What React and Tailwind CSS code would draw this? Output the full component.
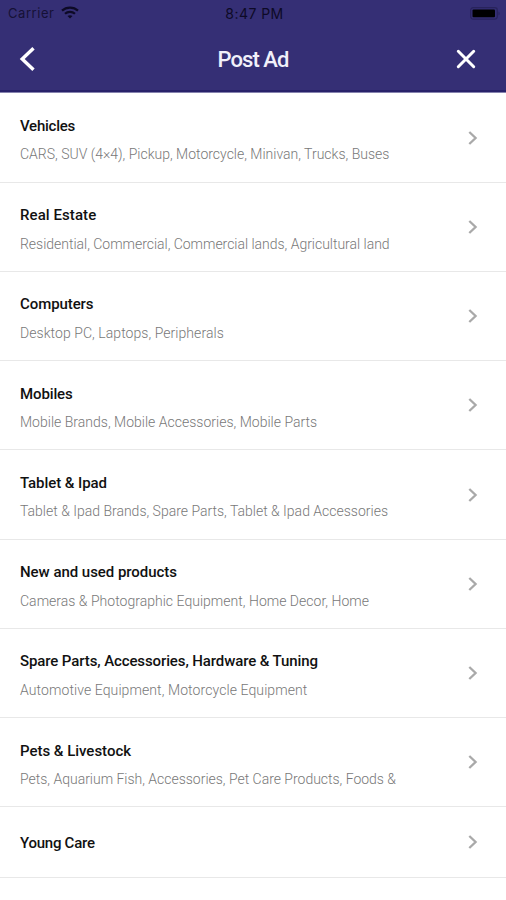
import React from "react";

const CATEGORIES = [
  { name: "Vehicles", sub: "CARS, SUV (4×4), Pickup, Motorcycle, Minivan, Trucks, Buses", nameSpacing: "tracking-[-0.25px]", subSpacing: "tracking-normal" },
  { name: "Real Estate", sub: "Residential, Commercial, Commercial lands, Agricultural land", nameSpacing: "tracking-[0.08px]", subSpacing: "tracking-[-0.02px]" },
  { name: "Computers", sub: "Desktop PC, Laptops, Peripherals", nameSpacing: "tracking-[-0.08px]", subSpacing: "tracking-[0.06px]" },
  { name: "Mobiles", sub: "Mobile Brands, Mobile Accessories, Mobile Parts", nameSpacing: "tracking-[-0.12px]", subSpacing: "tracking-[0.01px]" },
  { name: "Tablet & Ipad", sub: "Tablet & Ipad Brands, Spare Parts, Tablet & Ipad Accessories", nameSpacing: "tracking-[-0.07px]", subSpacing: "tracking-normal" },
  { name: "New and used products", sub: "Cameras & Photographic Equipment, Home Decor, Home", nameSpacing: "tracking-[-0.04px]", subSpacing: "tracking-[0.02px]" },
  { name: "Spare Parts, Accessories, Hardware & Tuning", sub: "Automotive Equipment, Motorcycle Equipment", nameSpacing: "tracking-[-0.11px]", subSpacing: "tracking-[0.09px]" },
  { name: "Pets & Livestock", sub: "Pets, Aquarium Fish, Accessories, Pet Care Products, Foods &", nameSpacing: "tracking-[-0.02px]", subSpacing: "tracking-[-0.01px]" },
  { name: "Young Care", nameSpacing: "tracking-[-0.25px]" },
];

function StatusBar() {
  return (
    <div className="grid grid-cols-3 items-center h-[26px] pt-px pl-[8px] pr-[5px] text-[#0d0a26] font-['Inter',sans-serif] text-[13px]">
      <div className="flex items-center gap-[7px]">
        <span className="tracking-[0.55px] text-[#151136]">Carrier</span>
        <svg className="-mt-[2px]" width="18" height="13" viewBox="0 0 18 13" fill="none" stroke="currentColor" strokeWidth="2.2">
          <path d="M1 4.6C5.4 0.5 12.6 0.5 17 4.6" />
          <path d="M4 7.8C6.8 5.2 11.2 5.2 14 7.8" />
          <path d="M9 12.6L6.5 10.1C7.9 8.9 10.1 8.9 11.5 10.1Z" fill="currentColor" stroke="none" />
        </svg>
      </div>
      <span className="-mx-2 text-center text-sm tracking-[0.45px]">8:47 PM</span>
      <svg className="justify-self-end" width="31" height="13" viewBox="0 0 31 13">
        <rect x="0.7" y="0.7" width="26.6" height="11.4" rx="2.5" fill="none" stroke="#28235c" strokeWidth="1.2" />
        <rect x="2.5" y="2.6" width="22.5" height="7.6" rx="1" fill="#000000" />
        <path d="M28.5 4.4C30 5 30 7.8 28.5 8.4Z" fill="#28235c" />
      </svg>
    </div>
  );
}

function Header() {
  return (
    <header className="h-[93px] bg-[#352f75] border-b border-[#8582ae]">
      <StatusBar />
      <div className="flex items-center justify-between h-[66px] pt-[2px] pl-[19px] pr-[30px] border-b-2 border-[#28226a]">
        <svg width="18" height="26" viewBox="0 0 18 26" fill="none" stroke="#ffffff" strokeWidth="3.4">
          <path d="M14.5 2.2L3.2 13L14.5 23.8" />
        </svg>
        <h1 className="pl-[13px] text-[22px] font-medium tracking-[-0.95px] text-[#f1f0fa]">Post Ad</h1>
        <svg width="20" height="20" viewBox="0 0 20 20" fill="none" stroke="#ffffff" strokeWidth="3" strokeLinecap="round">
          <path d="M2.3 2.3L17.7 17.7M17.7 2.3L2.3 17.7" />
        </svg>
      </div>
    </header>
  );
}

function CategoryRow({ item }) {
  return (
    <li className={`flex items-center justify-between pl-5 pr-[28px] border-b border-[#e8e8e8] ${item.sub ? "h-[89.25px]" : "h-[70.5px]"}`}>
      <div className={`whitespace-nowrap ${item.sub ? "pt-[5px]" : "pt-px"}`}>
        <p className={`text-[15px] leading-5 font-medium text-[#111111] ${item.nameSpacing}`}>{item.name}</p>
        {item.sub && <p className={`mt-[8.5px] text-sm leading-5 font-light text-[#787878] ${item.subSpacing}`}>{item.sub}</p>}
      </div>
      <svg width="11" height="16" viewBox="0 0 11 16" fill="none" stroke="#a9a9a9" strokeWidth="2.3">
        <path d="M2.3 2L8.6 8L2.3 14" />
      </svg>
    </li>
  );
}

export default function App() {
  return (
    <div className="h-[900px] overflow-hidden bg-white font-['Roboto',sans-serif]">
      <Header />
      <ul className="pt-[0.4px]">
        {CATEGORIES.map((item) => (
          <CategoryRow key={item.name} item={item} />
        ))}
      </ul>
    </div>
  );
}
